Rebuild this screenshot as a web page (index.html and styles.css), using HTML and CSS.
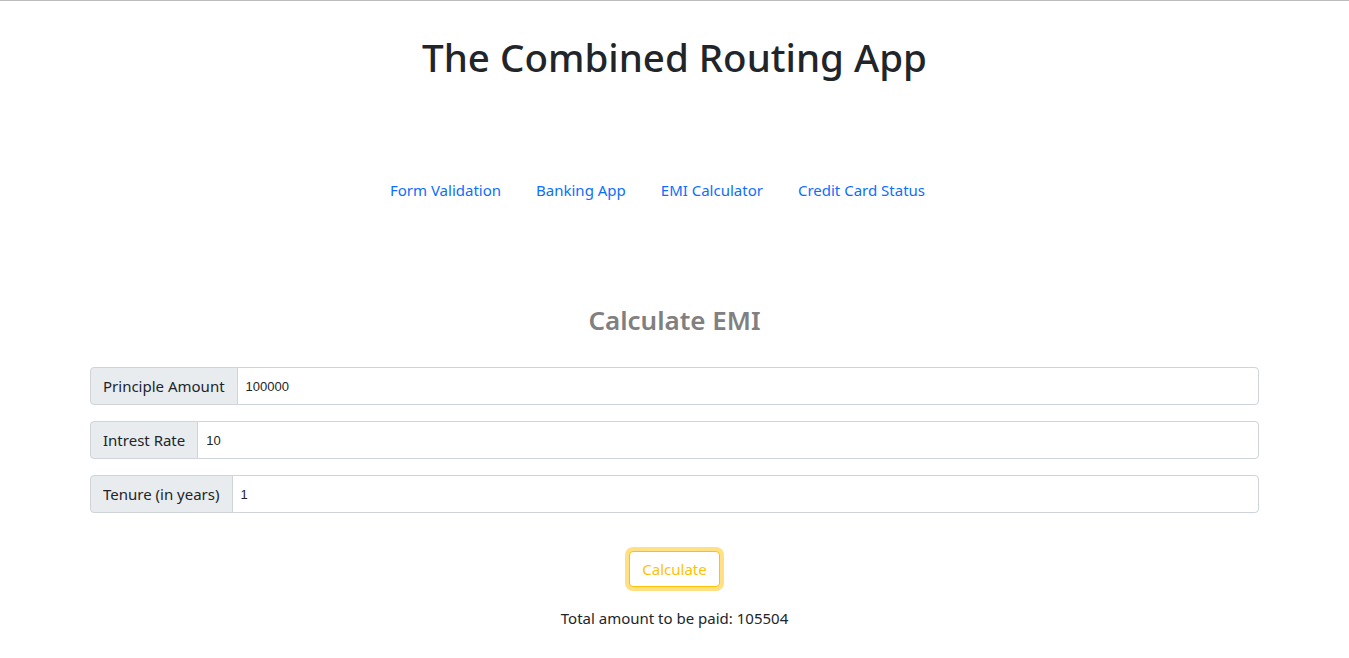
FILE: index.html
```html
<!DOCTYPE html>
<html lang="en">
<head>
<meta charset="utf-8">
<title>The Combined Routing App</title>
<link rel="stylesheet" href="styles.css">
</head>
<body>
<div class="app">
  <h1 class="title">The Combined Routing App</h1>
  <nav class="nav">
    <a class="nav-link" href="#">Form Validation</a>
    <a class="nav-link" href="#">Banking App</a>
    <a class="nav-link" href="#">EMI Calculator</a>
    <a class="nav-link" href="#">Credit Card Status</a>
  </nav>
  <section class="emi">
    <h2 class="emi-title">Calculate EMI</h2>
    <div class="input-group">
      <span class="input-group-text">Principle Amount</span>
      <input class="form-control" type="text" value="100000">
    </div>
    <div class="input-group">
      <span class="input-group-text">Intrest Rate</span>
      <input class="form-control" type="text" value="10">
    </div>
    <div class="input-group">
      <span class="input-group-text">Tenure (in years)</span>
      <input class="form-control" type="text" value="1">
    </div>
    <div class="actions">
      <button class="btn-outline-warning" type="button">Calculate</button>
    </div>
    <p class="result">Total amount to be paid: 105504</p>
  </section>
</div>
</body>
</html>
```

FILE: styles.css
```css
* { box-sizing: border-box; }
html, body { margin: 0; padding: 0; }
body {
  font-family: "Noto Sans", "Open Sans", sans-serif;
  font-size: 16px;
  line-height: 1.5;
  color: #212529;
  background: #fff;
  border-top: 1px solid #bcbcbc;
}
.app { padding: 0 90px; }
.title {
  margin: 33px 0 0;
  text-align: center;
  font-size: 38.5px;
  font-weight: 500;
  line-height: 1.2;
  color: #212529;
}
.nav {
  display: flex;
  justify-content: center;
  gap: 35px;
  margin-top: 98px;
  padding-right: 34px;
}
.nav-link {
  color: #0d6efd;
  text-decoration: none;
  font-size: 15px;
  line-height: 24px;
}
.emi { margin-top: 103px; }
.emi-title {
  margin: 0 0 31px;
  text-align: center;
  font-size: 26px;
  font-weight: 600;
  line-height: 1.2;
  color: #808080;
}
.input-group {
  display: flex;
  height: 38px;
  margin-bottom: 16px;
}
.input-group-text {
  display: flex;
  align-items: center;
  padding: 0 12px;
  font-size: 15px;
  background: #e9ecef;
  border: 1px solid #ced4da;
  border-radius: 4px 0 0 4px;
  white-space: nowrap;
  color: #212529;
}
.form-control {
  flex: 1;
  min-width: 0;
  margin-left: -1px;
  padding: 0 8px;
  font-family: "Liberation Sans", Arial, sans-serif;
  font-size: 13px;
  color: #212529;
  border: 1px solid #ced4da;
  border-radius: 0 4px 4px 0;
  background: #fff;
  outline: none;
}
.actions {
  display: flex;
  justify-content: center;
  margin-top: 38px;
}
.btn-outline-warning {
  font-family: "Noto Sans", "Open Sans", sans-serif;
  font-size: 15px;
  line-height: 22px;
  padding: 6px 12px;
  color: #ffc107;
  background: #fff;
  border: 1px solid #ffc107;
  border-radius: 4px;
  box-shadow: 0 0 0 4px rgba(255, 193, 7, 0.5);
  cursor: pointer;
}
.result {
  margin: 20px 0 0;
  text-align: center;
  font-size: 15px;
}
```
